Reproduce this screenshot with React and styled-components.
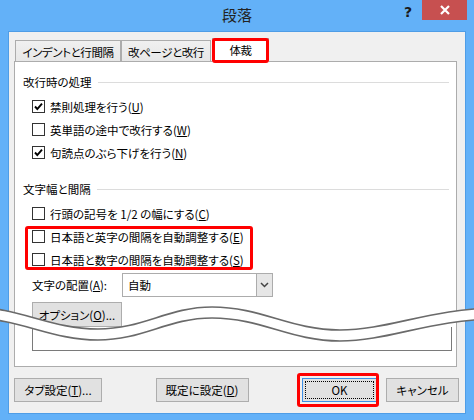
import React from "react";
import styled, { createGlobalStyle } from "styled-components";

const GlobalStyle = createGlobalStyle`
    html, body {
        margin: 0;
        padding: 0;
        background: #fff;
    }
    * {
        box-sizing: border-box;
    }
`;

const Window = styled.div`
    position: relative;
    width: 474px;
    height: 420px;
    display: flex;
    flex-direction: column;
    overflow: hidden;
    background: #63b1f8;
    font-family: "Noto Sans CJK JP", "Noto Sans", sans-serif;
    font-size: 11.5px;
    font-feature-settings: "palt";
    color: #000;
`;

const TitleBar = styled.div`
    display: grid;
    grid-template-columns: 1fr auto 1fr;
    height: 31px;
    flex: none;
`;

const Title = styled.div`
    grid-column: 2;
    font-size: 15px;
    line-height: 30px;
    color: #222;
`;

const Controls = styled.div`
    grid-column: 3;
    display: flex;
    justify-content: flex-end;
    align-items: flex-start;
    padding-right: 7px;
`;

const HelpButton = styled.div`
    width: 18px;
    height: 20px;
    margin-right: 5px;
    font-family: "DejaVu Sans", sans-serif;
    font-weight: bold;
    font-size: 14px;
    line-height: 24px;
    text-align: center;
    color: #1a1a1a;
`;

const CloseButton = styled.div`
    width: 45px;
    height: 20px;
    display: flex;
    align-items: center;
    justify-content: center;
    background: #c75050;
`;

const Client = styled.div`
    flex: 1;
    margin: 0 8px 6px;
    display: flex;
    flex-direction: column;
    padding: 6px 8px 0 5px;
    background: #f0f0f0;
    border: 1px solid #4f9de6;
`;

const TabStrip = styled.div`
    position: relative;
    z-index: 1;
    display: flex;
    align-items: flex-end;
    height: 24px;
    margin-bottom: -1px;
    padding-left: 1px;
`;

const Tab = styled.div`
    position: relative;
    width: ${(p) => p.$w}px;
    height: ${(p) => (p.$active ? 24 : 22)}px;
    margin-left: ${(p) => p.$gap || 0}px;
    display: flex;
    align-items: center;
    justify-content: center;
    padding-top: ${(p) => (p.$active ? 0 : 1)}px;
    letter-spacing: -0.4px;
    background: ${(p) =>
        p.$active ? "#fff" : "linear-gradient(#f0f0f0, #e7e7e7)"};
    border: 1px solid #acacac;
    border-bottom-color: ${(p) => (p.$active ? "transparent" : "#acacac")};
    white-space: nowrap;
`;

const Marker = styled.span`
    position: absolute;
    inset: ${(p) => p.$inset};
    width: ${(p) => (p.$w ? `${p.$w}px` : "auto")};
    border: 3px solid #ff0000;
    border-radius: 3px;
    pointer-events: none;
    z-index: 2;
`;

const Panel = styled.div`
    display: flex;
    flex-direction: column;
    height: 306px;
    flex: none;
    padding: 12px 7px 0 8px;
    background: #fff;
    border: 1px solid #acacac;
`;

const Group = styled.div`
    display: flex;
    flex-direction: column;
    margin-top: ${(p) => p.$top || 0}px;
`;

const GroupTitle = styled.div`
    display: flex;
    align-items: center;
    gap: 6px;
    height: 16px;
    white-space: nowrap;

    &::after {
        content: "";
        flex: 1;
        height: 1px;
        background: #dcdcdc;
    }
`;

const CheckList = styled.div`
    position: relative;
    display: flex;
    flex-direction: column;
    margin-top: ${(p) => p.$top || 0}px;
`;

const CheckRow = styled.div`
    display: flex;
    align-items: center;
    gap: 5px;
    height: 23px;
    padding-left: 9px;
    white-space: nowrap;
`;

const Box = styled.span`
    flex: none;
    width: 13px;
    height: 13px;
    display: flex;
    align-items: center;
    justify-content: center;
    border: 1px solid #333;
    background: #fff;
`;

const SelectRow = styled.div`
    display: flex;
    align-items: center;
    height: 24px;
    margin-top: 2px;
    padding-left: 9px;
`;

const FieldLabel = styled.span`
    width: 90px;
    white-space: nowrap;
`;

const Select = styled.div`
    display: flex;
    width: 151px;
    height: 24px;
    border: 1px solid #acacac;
    background: #fff;
`;

const SelectValue = styled.span`
    flex: 1;
    padding-left: 5px;
    line-height: 22px;
`;

const SelectArrow = styled.span`
    width: 16px;
    display: flex;
    align-items: center;
    justify-content: center;
    background: #e6e6e6;
    border-left: 1px solid #acacac;
`;

const Button = styled.button`
    position: relative;
    width: ${(p) => p.$w}px;
    height: ${(p) => p.$h || 24}px;
    margin: ${(p) => p.$margin || 0};
    padding: 0;
    display: flex;
    align-items: center;
    justify-content: center;
    font: inherit;
    font-feature-settings: inherit;
    color: #000;
    white-space: nowrap;
    background: #e1e1e1;
    border: 1px solid ${(p) => (p.$default ? "#3c8fe5" : "#adadad")};

    ${(p) =>
        p.$default &&
        `
        &::before {
            content: "";
            position: absolute;
            inset: 2px;
            border: 1px dotted #000;
        }
    `}
`;

const PreviewBox = styled.div`
    width: 420px;
    height: 24px;
    margin-left: 9px;
    border: 1px solid #7a7a7a;
    border-top: none;
`;

const ButtonRow = styled.div`
    display: flex;
    justify-content: space-between;
    margin: 11px -2px 0 0;
`;

const ButtonGroup = styled.div`
    display: flex;
    gap: 9px;
`;

const Wave = styled.svg`
    position: absolute;
    top: 0;
    left: 0;
    pointer-events: none;
`;

function CheckIcon() {
    return (
        <svg width="11" height="11" viewBox="0 0 11 11">
            <polyline
                points="2,5.5 4.3,8 9,2.6"
                fill="none"
                stroke="#000"
                strokeWidth="1.9"
            />
        </svg>
    );
}

function Check({ checked, children }) {
    return (
        <CheckRow>
            <Box>{checked && <CheckIcon />}</Box>
            <span>{children}</span>
        </CheckRow>
    );
}

const TOP_LINE =
    "M-30,307 C20,307 50,329 98,329 C143,329 168,307 212,307 C262,307 290,330 340,330 C390,330 430,308 500,308";
const LOW_LINE =
    "M-30,318 C20,318 50,340 98,340 C143,340 168,318 212,318 C262,318 290,341 340,341 C390,341 430,319 500,319";
const BAND =
    TOP_LINE +
    " L500,319 C430,319 390,341 340,341 C290,341 262,318 212,318 C168,318 143,340 98,340 C50,340 20,318 -30,318 Z";

export default function App() {
    return (
        <Window>
            <GlobalStyle />
            <TitleBar>
                <Title>段落</Title>
                <Controls>
                    <HelpButton>?</HelpButton>
                    <CloseButton>
                        <svg width="10" height="10" viewBox="0 0 10 10">
                            <path
                                d="M1,1 L9,9 M9,1 L1,9"
                                stroke="#fff"
                                strokeWidth="2.2"
                            />
                        </svg>
                    </CloseButton>
                </Controls>
            </TitleBar>

            <Client>
                <TabStrip>
                    <Tab $w={106}>インデントと行間隔</Tab>
                    <Tab $w={90}>改ページと改行</Tab>
                    <Tab $w={57} $gap={1} $active>
                        体裁
                        <Marker $inset="-1px -1px -2px -1px" />
                    </Tab>
                </TabStrip>

                <Panel>
                    <Group>
                        <GroupTitle>改行時の処理</GroupTitle>
                        <CheckList $top={5}>
                            <Check checked>
                                禁則処理を行う(<u>U</u>)
                            </Check>
                            <Check>
                                英単語の途中で改行する(<u>W</u>)
                            </Check>
                            <Check checked>
                                句読点のぶら下げを行う(<u>N</u>)
                            </Check>
                        </CheckList>
                    </Group>

                    <Group $top={17}>
                        <GroupTitle>文字幅と間隔</GroupTitle>
                        <CheckList $top={5}>
                            <Check>
                                行頭の記号を 1/2 の幅にする(<u>C</u>)
                            </Check>
                        </CheckList>
                        <CheckList>
                            <Check>
                                日本語と英字の間隔を自動調整する(<u>E</u>)
                            </Check>
                            <Check>
                                日本語と数字の間隔を自動調整する(<u>S</u>)
                            </Check>
                            <Marker $inset="1px auto 1px 2px" $w={228} />
                        </CheckList>
                    </Group>

                    <SelectRow>
                        <FieldLabel>
                            文字の配置(<u>A</u>):
                        </FieldLabel>
                        <Select>
                            <SelectValue>自動</SelectValue>
                            <SelectArrow>
                                <svg width="9" height="6" viewBox="0 0 9 6">
                                    <polyline
                                        points="1,1 4.5,4.5 8,1"
                                        fill="none"
                                        stroke="#444"
                                        strokeWidth="1.5"
                                    />
                                </svg>
                            </SelectArrow>
                        </Select>
                    </SelectRow>

                    <Button $w={90} $h={25} $margin="5px 0 0 9px">
                        オプション(<u>O</u>)...
                    </Button>
                    <PreviewBox />
                </Panel>

                <ButtonRow>
                    <Button $w={88}>
                        タブ設定(<u>T</u>)...
                    </Button>
                    <Button $w={93}>
                        既定に設定(<u>D</u>)
                    </Button>
                    <ButtonGroup>
                        <Button $w={75} $default>
                            OK
                            <Marker $inset="-6px -3px -6px -6px" />
                        </Button>
                        <Button $w={73}>キャンセル</Button>
                    </ButtonGroup>
                </ButtonRow>
            </Client>

            <Wave width="474" height="420" viewBox="0 0 474 420">
                <path d={BAND} fill="#fff" />
                <path d={TOP_LINE} fill="none" stroke="#6a6a6a" strokeWidth="1.6" />
                <path d={LOW_LINE} fill="none" stroke="#6a6a6a" strokeWidth="1.6" />
            </Wave>
        </Window>
    );
}
